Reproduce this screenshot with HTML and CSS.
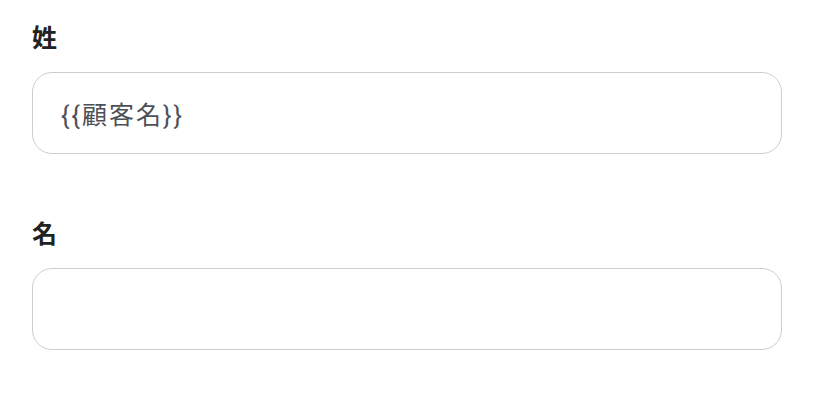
FILE: index.html
```html
<!DOCTYPE html>
<html lang="ja">
<head>
<meta charset="utf-8">
<link rel="stylesheet" href="styles.css">
</head>
<body>
<form class="form">
  <div class="field">
    <label class="label">姓</label>
    <div class="input">{{顧客名}}</div>
  </div>
  <div class="field">
    <label class="label">名</label>
    <div class="input"></div>
  </div>
</form>
</body>
</html>
```
FILE: styles.css
```css
html, body {
  margin: 0;
  padding: 0;
  background: #ffffff;
}
body {
  font-family: "Noto Sans CJK JP", "Noto Sans", sans-serif;
}
.form {
  display: flex;
  flex-direction: column;
  gap: 60px;
  padding: 18px 0 0 32px;
  width: 750px;
}
.field {
  display: flex;
  flex-direction: column;
  gap: 18px;
}
.label {
  font-size: 25px;
  line-height: 36px;
  font-weight: 700;
  color: #222222;
}
.input {
  box-sizing: border-box;
  height: 82px;
  border: 1px solid #cbcdd4;
  border-radius: 20px;
  padding: 0 28px;
  display: flex;
  align-items: center;
  font-family: Roboto, "Noto Sans CJK JP", sans-serif;
  font-size: 25px;
  letter-spacing: 2px;
  color: #4d5157;
}
```
